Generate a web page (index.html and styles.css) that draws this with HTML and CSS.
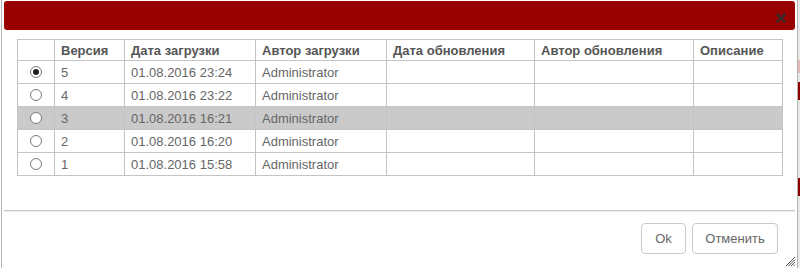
FILE: index.html
```html
<!DOCTYPE html>
<html lang="ru">
<head>
<meta charset="utf-8">
<link rel="stylesheet" href="styles.css">
</head>
<body>
<div class="page">
  <div class="dialog">
    <div class="titlebar">
      <span class="close" title="Закрыть">
        <svg width="10" height="10" viewBox="0 0 10 10"><path d="M1.5 1.5L8.5 8.5M8.5 1.5L1.5 8.5" stroke="#3a2626" stroke-width="2.6" stroke-linecap="square"/></svg>
      </span>
    </div>
    <div class="body">
      <table class="grid">
        <colgroup>
          <col class="c-radio"><col class="c-ver"><col class="c-date"><col class="c-author"><col class="c-udate"><col class="c-uauthor"><col class="c-desc">
        </colgroup>
        <thead>
          <tr><th></th><th>Версия</th><th>Дата загрузки</th><th>Автор загрузки</th><th>Дата обновления</th><th>Автор обновления</th><th>Описание</th></tr>
        </thead>
        <tbody>
          <tr><td class="rc"><span class="radio checked"></span></td><td>5</td><td>01.08.2016 23:24</td><td>Administrator</td><td></td><td></td><td></td></tr>
          <tr><td class="rc"><span class="radio"></span></td><td>4</td><td>01.08.2016 23:22</td><td>Administrator</td><td></td><td></td><td></td></tr>
          <tr class="hover"><td class="rc"><span class="radio"></span></td><td>3</td><td>01.08.2016 16:21</td><td>Administrator</td><td></td><td></td><td></td></tr>
          <tr><td class="rc"><span class="radio"></span></td><td>2</td><td>01.08.2016 16:20</td><td>Administrator</td><td></td><td></td><td></td></tr>
          <tr><td class="rc"><span class="radio"></span></td><td>1</td><td>01.08.2016 15:58</td><td>Administrator</td><td></td><td></td><td></td></tr>
        </tbody>
      </table>
    </div>
    <div class="separator"></div>
    <div class="footer">
      <button class="btn btn-ok">Ok</button>
      <button class="btn btn-cancel">Отменить</button>
    </div>
    <svg class="grip" width="11" height="11" viewBox="0 0 11 11"><path d="M10 1L1 10M10 3.5L3.5 10M10 6L6 10M10 8.5L8.5 10" stroke="#555" stroke-width="1"/></svg>
  </div>
  <div class="backdrop"></div>
</div>
</body>
</html>
```
FILE: styles.css
```css
* { box-sizing: border-box; }
html, body { margin: 0; padding: 0; background: #fff; }
body { font-family: "Liberation Sans", Arial, sans-serif; }

.page {
  display: flex;
  width: 800px;
  height: 268px;
  overflow: hidden;
}

.dialog {
  position: relative;
  width: 797px;
  margin-left: 1px;
  border-left: 1px solid #b3b3b3;
  border-right: 1px solid #b3b3b3;
  padding: 1px 2px 0 2px;
  background: #fff;
  display: flex;
  flex-direction: column;
}

.backdrop {
  flex: 1;
  background: linear-gradient(to bottom,
    #e8e8e8 0, #e8e8e8 60px,
    #e7b8b8 60px, #e7b8b8 73px,
    #e8e8e8 73px, #e8e8e8 82px,
    #8e0000 82px, #8e0000 100px,
    #e8e8e8 100px, #e8e8e8 178px,
    #8e0000 178px, #8e0000 196px,
    #e8e8e8 196px);
}

.titlebar {
  height: 29px;
  background: #990000;
  border-radius: 3px;
  display: flex;
  align-items: center;
  justify-content: flex-end;
  padding-right: 9px;
}
.close { display: flex; margin-top: 4px; }

.body {
  padding: 9px 12px 0 13px;
  height: 180px;
}

.grid {
  border-collapse: collapse;
  table-layout: fixed;
  width: 765px;
  border: 1px solid #aeaeae;
  font-size: 13px;
  color: #666;
}
.c-radio { width: 37px; }
.c-ver { width: 70px; }
.c-date { width: 131px; }
.c-author { width: 131px; }
.c-udate { width: 148px; }
.c-uauthor { width: 159px; }
.c-desc { width: 89px; }

.grid th, .grid td {
  border: 1px solid #c4c4c4;
  text-align: left;
  padding: 0 6px;
  white-space: nowrap;
  overflow: hidden;
}
.grid th {
  height: 21px;
  font-weight: bold;
  color: #555;
}
.grid td { height: 23px; }
.grid tr.hover td { background: #cacaca; }
.grid td.rc { text-align: center; padding: 0; }

.radio {
  display: inline-block;
  width: 12px;
  height: 12px;
  border: 1px solid #7a7a7a;
  border-radius: 50%;
  background: #fff;
  vertical-align: middle;
  position: relative;
  top: -1px;
}
.radio.checked::after {
  content: "";
  position: absolute;
  left: 2px;
  top: 2px;
  width: 6px;
  height: 6px;
  border-radius: 50%;
  background: #1e1e1e;
}

.separator {
  height: 2px;
  border-top: 1px solid #c8c8c8;
  border-bottom: 1px solid #ececec;
}

.footer {
  display: flex;
  justify-content: flex-end;
  gap: 6px;
  padding: 11px 17px 0 0;
}
.btn {
  height: 31px;
  border: 1px solid #c9c9c9;
  border-radius: 4px;
  background: #fff;
  color: #666;
  font-family: "Liberation Sans", Arial, sans-serif;
  font-size: 13px;
  padding: 0;
}
.btn-ok { width: 45px; }
.btn-cancel { width: 86px; }

.grip {
  position: absolute;
  right: 1px;
  bottom: 1px;
}
```
